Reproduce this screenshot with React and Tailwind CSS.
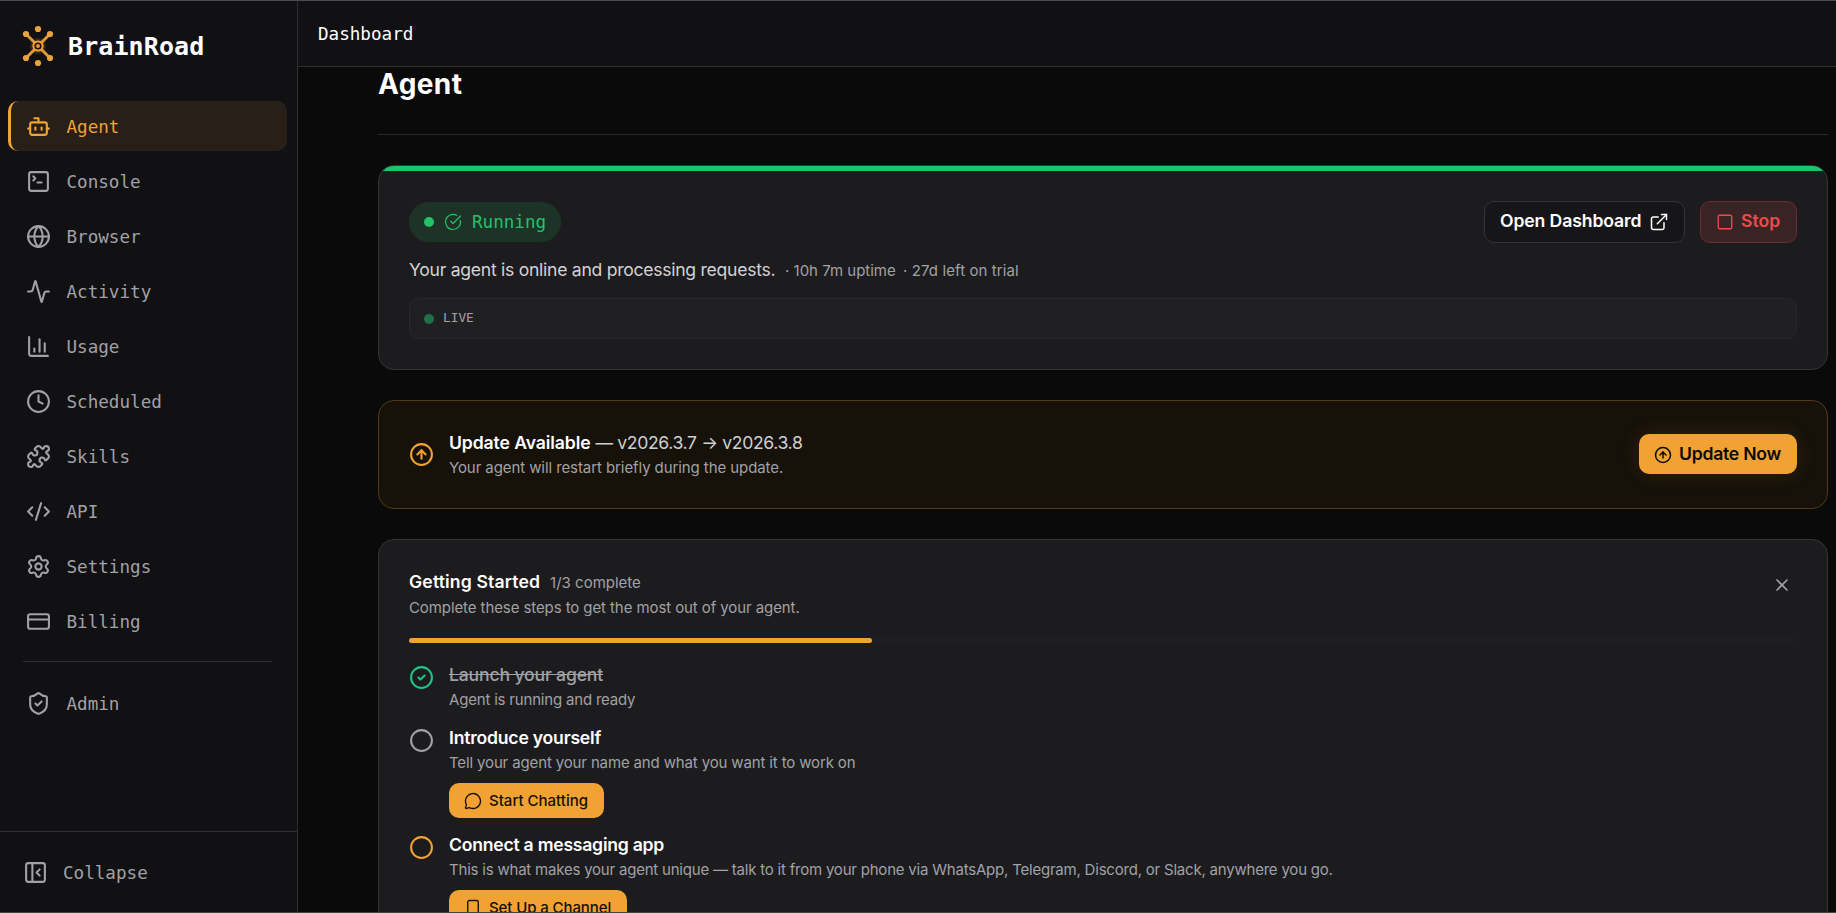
import {
  Activity,
  Bot,
  ChartColumn,
  Circle,
  CircleArrowUp,
  CircleCheck,
  CircleCheckBig,
  Clock,
  CodeXml,
  CreditCard,
  ExternalLink,
  Globe,
  MessageCircle,
  PanelLeftClose,
  Puzzle,
  Settings,
  ShieldCheck,
  Smartphone,
  Square,
  SquareTerminal,
  X,
} from 'lucide-react';

const navItems = [
  { label: 'Agent', icon: Bot, active: true },
  { label: 'Console', icon: SquareTerminal },
  { label: 'Browser', icon: Globe },
  { label: 'Activity', icon: Activity },
  { label: 'Usage', icon: ChartColumn },
  { label: 'Scheduled', icon: Clock },
  { label: 'Skills', icon: Puzzle },
  { label: 'API', icon: CodeXml },
  { label: 'Settings', icon: Settings },
  { label: 'Billing', icon: CreditCard },
];

function Logo() {
  const dots = [
    [15, 3], [15, 37], [3, 8], [27, 8], [3, 32], [27, 32],
  ];
  return (
    <svg width="30" height="40" viewBox="0 0 30 40" className="shrink-0 overflow-visible">
      <defs>
        <radialGradient id="glow">
          <stop offset="0" stopColor="#f0a030" stopOpacity="0.6" />
          <stop offset="1" stopColor="#f0a030" stopOpacity="0" />
        </radialGradient>
      </defs>
      <circle cx="15" cy="20" r="9" fill="url(#glow)" />
      <path d="M3 8 L27 32 M27 8 L3 32" stroke="#e09a35" strokeWidth="3" />
      {dots.map(([x, y]) => (
        <circle key={`${x}-${y}`} cx={x} cy={y} r="3.1" fill="#e8a33c" />
      ))}
      <circle cx="15" cy="20" r="4.6" fill="#1c1406" stroke="#f0a030" strokeWidth="2" />
      <circle cx="15" cy="20" r="2" fill="#e09a35" />
    </svg>
  );
}

function NavItem({ label, icon: Icon, active }) {
  return (
    <a
      className={
        active
          ? 'flex h-[50px] items-center gap-[15px] rounded-[10px] border-l-[3px] border-[#f2a133] bg-[#282018] pl-[15px] text-[#f2a133]'
          : 'flex h-[50px] items-center gap-[15px] rounded-[10px] border-l-[3px] border-transparent pl-[15px] text-[#a1a1a6]'
      }
    >
      <Icon size={25} strokeWidth={2} />
      <span className="pt-[3px] pl-[0.5px] text-[17.6px]">{label}</span>
    </a>
  );
}

function Sidebar() {
  return (
    <aside className="flex w-[298px] shrink-0 flex-col border-r border-[#2f2f32] bg-[#111113] font-['DejaVu_Sans_Mono',monospace]">
      <div className="flex h-[90px] items-center gap-[15px] pl-[23px]">
        <Logo />
        <span className="pt-0.5 text-[25px] font-bold tracking-[0.1px] text-white">BrainRoad</span>
      </div>
      <nav className="flex flex-col gap-[5px] pt-[10px] pr-[10px] pl-2">
        {navItems.map((item) => (
          <NavItem key={item.label} {...item} />
        ))}
        <hr className="mt-[10px] mr-[15px] mb-[11px] ml-[15px] border-[#2f2f32]" />
        <NavItem label="Admin" icon={ShieldCheck} />
      </nav>
      <div className="mt-auto flex h-[81px] items-center gap-[15px] border-t border-[#2f2f32] pl-[23px] text-[#a1a1a6]">
        <PanelLeftClose size={25} strokeWidth={2} />
        <span className="pt-0.5 text-[17.6px]">Collapse</span>
      </div>
    </aside>
  );
}

function StatusCard() {
  return (
    <section className="relative h-[205px] overflow-hidden rounded-2xl border border-[#353537] bg-[#1c1c1e] px-[30px] pt-[35px]">
      <div className="absolute inset-x-0 top-0 h-[5px] bg-[#23c268]" />
      <div className="flex h-[42px] items-center">
        <div className="flex h-10 w-[152px] items-center rounded-full bg-[#1d3328] pl-[15px] text-[#23c268]">
          <span className="h-[10px] w-[10px] rounded-full bg-[#23c268]" />
          <CircleCheckBig size={18} strokeWidth={1.6} className="ml-[10px]" />
          <span className="ml-[10px] font-['DejaVu_Sans_Mono',monospace] text-[17.6px]">Running</span>
        </div>
        <button className="ml-auto flex h-[42px] w-[201px] items-center rounded-[10px] border border-[#353537] bg-[#161618] pl-[15px] text-[17.6px] font-semibold tracking-[-0.1px] text-white">
          <span className="pb-0.5">Open Dashboard</span>
          <ExternalLink size={20} strokeWidth={1.8} className="ml-[7px]" />
        </button>
        <button className="ml-[15px] flex h-[42px] w-[97px] items-center rounded-[10px] border border-[#6b2d2e] bg-[#3a2325] pl-[15px] text-[17.6px] font-semibold text-[#ea4b4b]">
          <Square size={18} strokeWidth={1.8} />
          <span className="ml-[7px] pb-0.5">Stop</span>
        </button>
      </div>
      <div className="mt-[13px] flex h-7 items-baseline text-[15px] leading-7 text-[#a1a1a6]">
        <span className="w-[376px] text-[17.6px] tracking-[-0.28px] text-[#d2d2d6]">
          Your agent is online and processing requests.
        </span>
        <span className="w-[118px]">· 10h 7m uptime</span>
        <span className="tracking-[0.1px]">· 27d left on trial</span>
      </div>
      <div className="mt-[14px] flex h-[41px] items-center rounded-[10px] border border-[#29292b] bg-[#202022] pl-[14px] text-[#a1a1a6]">
        <span className="mt-px h-[10px] w-[10px] rounded-full bg-[#20704a]" />
        <span className="ml-[9px] pb-0.5 font-['DejaVu_Sans_Mono',monospace] text-[12.8px]">LIVE</span>
      </div>
    </section>
  );
}

function UpdateCard() {
  return (
    <section className="mt-[30px] flex h-[109px] items-center rounded-2xl border border-[#533a16] bg-[#161109] px-[30px]">
      <CircleArrowUp size={25} strokeWidth={2} className="text-[#f2a133]" />
      <div className="ml-[15px] text-[15px] leading-[25px] text-[#a1a1a6]">
        <p className="text-[17.6px]">
          <span className="font-semibold tracking-[-0.1px] text-white">Update Available</span>
          <span className="ml-[5px] tracking-[-0.36px] text-[#cfcfd3]">— v2026.3.7 → v2026.3.8</span>
        </p>
        <p className="tracking-[-0.085px]">Your agent will restart briefly during the update.</p>
      </div>
      <button className="mb-px ml-auto flex h-10 w-[158px] items-center rounded-[10px] bg-[#f2a133] pl-[15px] text-[17.6px] font-semibold tracking-[-0.25px] text-[#0a0a0a] shadow-[0_0_22px_rgba(242,161,51,0.12)]">
        <CircleArrowUp size={18} strokeWidth={2} className="mt-px" />
        <span className="ml-[7px]">Update Now</span>
      </button>
    </section>
  );
}

function GettingStarted() {
  return (
    <section className="mt-[30px] h-[480px] rounded-2xl border border-[#353537] bg-[#1c1c1e] px-[30px] pt-[29px] text-[15px] leading-[25px] text-[#a1a1a6]">
      <div className="flex items-start justify-between">
        <div>
          <p>
            <span className="text-[17.6px] font-semibold tracking-[0.15px] text-white">Getting Started</span>
            <span className="ml-[10px]">1/3 complete</span>
          </p>
          <p className="tracking-[-0.09px]">Complete these steps to get the most out of your agent.</p>
        </div>
        <X size={20} strokeWidth={2} className="mt-[6px] mr-[5px]" />
      </div>
      <div className="mt-[18px] h-[5px] rounded-full bg-[#1e1e20]">
        <div className="h-full w-1/3 rounded-full bg-[#f2a133]" />
      </div>

      <ul className="mt-[19px] flex flex-col gap-[13px]">
        <li className="flex gap-[15px]">
          <CircleCheck size={25} strokeWidth={2} className="mt-[3px] text-[#1cc48a]" />
          <div>
            <p className="text-[17.6px] font-medium tracking-[-0.16px] line-through">Launch your agent</p>
            <p className="tracking-[-0.19px]">Agent is running and ready</p>
          </div>
        </li>
        <li className="flex gap-[15px]">
          <Circle size={25} strokeWidth={2} className="mt-[3px]" />
          <div>
            <p className="text-[17.6px] font-semibold tracking-[-0.22px] text-white">Introduce yourself</p>
            <p className="tracking-[-0.14px]">Tell your agent your name and what you want it to work on</p>
            <button className="mt-2 mb-px flex h-[35px] w-[155px] items-center rounded-[10px] bg-[#f2a133] pl-[15px] font-medium text-[#141006]">
              <MessageCircle size={18} strokeWidth={1.8} />
              <span className="ml-[7px] pb-px">Start Chatting</span>
            </button>
          </div>
        </li>
        <li className="flex gap-[15px]">
          <Circle size={25} strokeWidth={2} className="mt-[3px] text-[#f2a133]" />
          <div>
            <p className="text-[17.6px] font-semibold tracking-[-0.24px] text-white">Connect a messaging app</p>
            <p className="tracking-[-0.21px]">
              This is what makes your agent unique — talk to it from your phone via WhatsApp, Telegram, Discord, or Slack, anywhere you go.
            </p>
            <button className="mt-2 flex h-[35px] w-[178px] items-center rounded-[10px] bg-[#f2a133] pl-[15px] font-medium tracking-[-0.1px] text-[#141006]">
              <Smartphone size={18} strokeWidth={1.8} />
              <span className="ml-[7px] pb-px">Set Up a Channel</span>
            </button>
          </div>
        </li>
      </ul>
    </section>
  );
}

export default function App() {
  return (
    <div className="flex h-[913px] w-[1836px] overflow-hidden border-t border-b border-t-[#4b4d4d] border-b-[#4a4040] bg-[#0a0a0a] font-['Inter',sans-serif]">
      <Sidebar />
      <div className="flex min-w-0 flex-1 flex-col">
        <header className="flex h-[66px] shrink-0 items-center border-b border-[#2f2f32] bg-[#111113] pt-0.5 pl-5 font-['DejaVu_Sans_Mono',monospace] text-[17.6px] text-white">
          Dashboard
        </header>
        <main className="min-h-0 flex-1 overflow-hidden pr-2 pl-20">
          <h1 className="border-b border-[#262628] pb-[33px] text-[28px] leading-[34px] font-bold tracking-[0.4px] text-white">
            Agent
          </h1>
          <div className="mt-[30px]">
            <StatusCard />
            <UpdateCard />
            <GettingStarted />
          </div>
        </main>
      </div>
    </div>
  );
}
